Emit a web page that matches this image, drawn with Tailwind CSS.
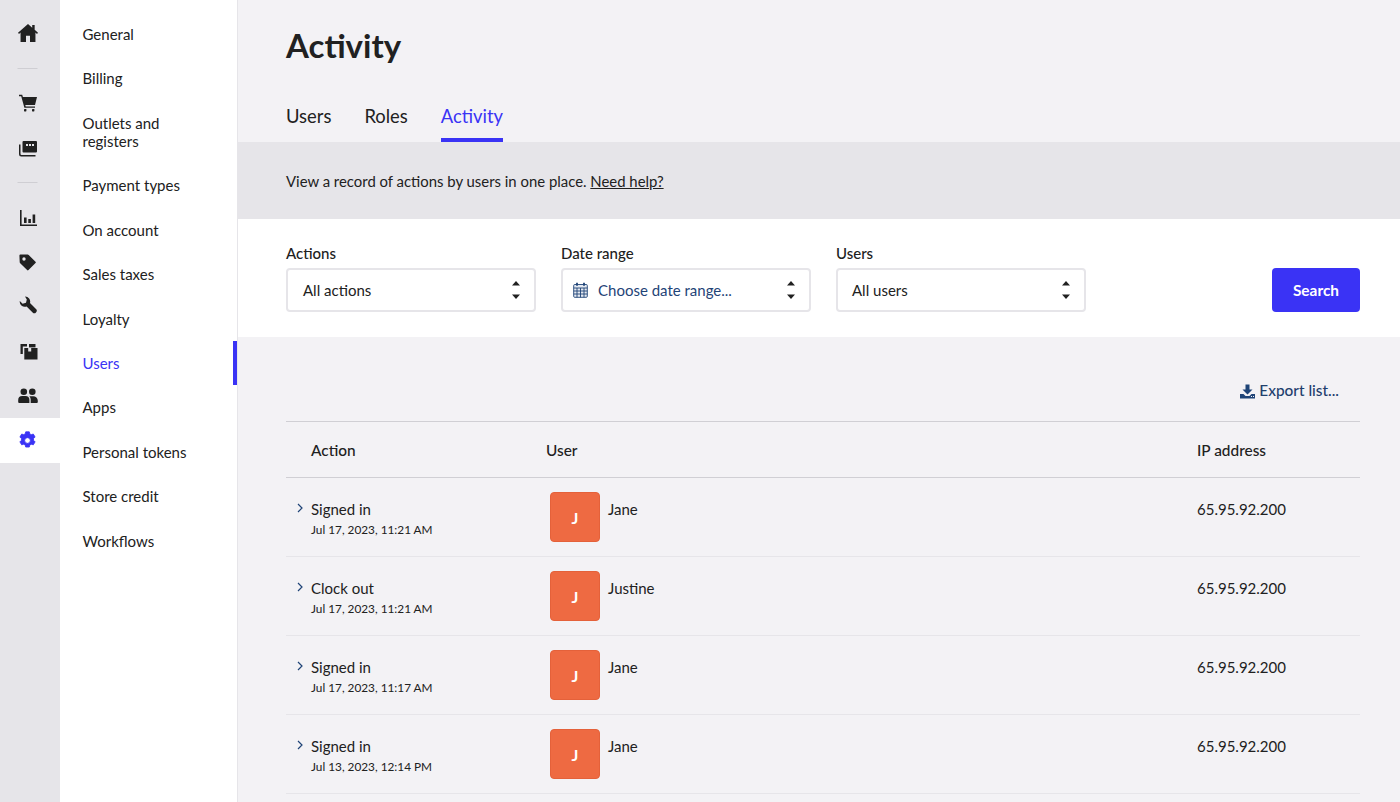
<!DOCTYPE html>
<html>
<head>
<meta charset="utf-8">
<script src="https://cdn.jsdelivr.net/npm/@tailwindcss/browser@4"></script>
</head>
<body class="m-0 overflow-hidden">
<div class="flex h-[802px] w-[1400px] overflow-hidden bg-[#f3f2f5] font-['Lato',sans-serif] text-[15px] text-[#212121]">
  <!-- icon rail -->
  <nav class="flex w-[60px] shrink-0 flex-col items-center bg-[#e6e5e9] text-[#212121]">
    <div class="flex h-[68px] w-full items-center justify-center pb-[2px] pr-[5px]">
      <svg class="h-[20px] w-[20px]" viewBox="0 0 18 18" fill="currentColor"><path d="M9 .8 0 8.800l.9 1 1.400-1.200V17h4.900v-5.600h3.600V17h4.900V8.600l1.400 1.200.9-1-3-2.700V1.800h-2.200v2.400z"/></svg>
    </div>
    <div class="h-px w-5 -translate-x-[2.5px] bg-[#cfced3]"></div>
    <div class="mt-[12px] flex h-[44px] w-full items-center justify-center pr-[5px]">
      <svg class="h-[18px] w-[18px]" viewBox="0 0 18 18" fill="currentColor"><path d="M0 .8h3.200l.7 2.200H18l-2 8H6.300l.4 1.400H16v1.400H5.400L2.200 2.200H0z"/><rect x="5" y="15" width="2.400" height="2.400" rx=".6"/><rect x="13" y="15" width="2.400" height="2.400" rx=".6"/></svg>
    </div>
    <div class="flex h-[44.4px] w-full items-center justify-center pr-[5px] pt-[3px]">
      <svg class="h-[18px] w-[18px]" viewBox="0 0 18 18" fill="currentColor"><path fill-rule="evenodd" d="M4.500 1H17a1 1 0 0 1 1 1v9.500a1 1 0 0 1-1 1H4.500a1 1 0 0 1-1-1V2a1 1 0 0 1 1-1zM7 4v2h2V4zm3 0v2h2V4zm3 0v2h2V4z"/><path d="M0 4.500h1.500V14a1 1 0 0 0 1 1H16.500v1.500H2.200A2.200 2.200 0 0 1 0 14.300z"/></svg>
    </div>
    <div class="mt-[13px] h-px w-5 -translate-x-[2.5px] bg-[#cfced3]"></div>
    <div class="mt-[13px] flex h-[44.4px] w-full items-center justify-center pb-[2px] pr-[5px]">
      <svg class="h-[18px] w-[18px]" viewBox="0 0 18 18" fill="currentColor"><path d="M1 1h1.600v14.400H18V17H1z"/><path d="M5 8.500h2.600V14H5zM9.300 10h2.600v4H9.300zM13.600 5.500h2.600V14h-2.600z"/></svg>
    </div>
    <div class="flex h-[44.4px] w-full items-center justify-center pr-[5px]">
      <svg class="h-[17px] w-[17px]" viewBox="0 0 17 17" fill="currentColor"><path fill-rule="evenodd" d="M.4 1.500A1 1 0 0 1 1.400.6L8.700.5a1.500 1.500 0 0 1 1 .4l6.800 6.800a1 1 0 0 1 0 1.400L9.500 16.100a1 1 0 0 1-1.400 0L1.200 9.200a1.500 1.500 0 0 1-.5-1zM5 3.300a1.700 1.700 0 1 0 0 3.400 1.700 1.700 0 0 0 0-3.400z"/></svg>
    </div>
    <div class="flex h-[44.4px] w-full items-start justify-center pr-[5px] pt-[11px]">
      <svg class="h-[18px] w-[18px]" viewBox="0 0 18 18" fill="currentColor"><path d="M6 .6A5 5 0 0 1 11 7l6 6a2.400 2.400 0 0 1-3.400 3.400l-6-6A5 5 0 0 1 .8 5l2.800 2.800L7 6.800l.8-3.400z"/></svg>
    </div>
    <div class="flex h-[44.4px] w-full items-center justify-center pr-[3px]">
      <svg class="h-[18px] w-[18px]" viewBox="0 0 18 18" fill="currentColor"><path d="M.5 1H7v2.400H2.800V11H.5z"/><path d="M9 1h6.500v3.400H9z"/><path d="M4.300 5h3.900v3.600h3V5h6.300v11.500H4.300z"/></svg>
    </div>
    <div class="flex h-[44.4px] w-full items-center justify-center pr-[5px]">
      <svg class="h-[18px] w-[20px]" viewBox="0 0 20 18" fill="currentColor"><circle cx="5.800" cy="4.700" r="3.300"/><circle cx="14.300" cy="4.700" r="3.300"/><path d="M.2 13a4 4 0 0 1 4-4h3.200a4 4 0 0 1 4 4v3H1.200a1 1 0 0 1-1-1z"/><path d="M12.700 16v-3.500a5 5 0 0 0-1.300-3.300h3.800a4.600 4.600 0 0 1 4.600 4.600V15a1 1 0 0 1-1 1z"/></svg>
    </div>
    <div class="flex h-[44.4px] w-full items-center justify-center bg-white pr-[5px] text-[#3a33f5]">
      <svg class="h-[19px] w-[19px]" viewBox="0 0 18 18" fill="currentColor" stroke="currentColor" stroke-width=".8" stroke-linejoin="round"><path fill-rule="evenodd" d="M7.300.8h3.400l.5 2 1.300.7 2-.6L16.200 5.700l-1.500 1.500v1.600l1.500 1.500-1.700 2.800-2-.6-1.300.7-.5 2H7.300l-.5-2-1.300-.7-2 .6-1.700-2.800 1.500-1.500V7.200L1.800 5.700l1.700-2.800 2 .6 1.300-.7zM9 6.300a2.700 2.700 0 1 0 0 5.400 2.700 2.700 0 0 0 0-5.400z"/></svg>
    </div>
  </nav>

  <!-- secondary sidebar -->
  <aside class="w-[178px] shrink-0 border-r border-[#e6e5e9] bg-white pt-[11.7px] leading-[18.4px]">
    <a class="block py-[13px] pl-[22.5px]">General</a>
    <a class="block py-[13px] pl-[22.5px]">Billing</a>
    <a class="block py-[13px] pl-[22.5px] pr-10">Outlets and registers</a>
    <a class="block py-[13px] pl-[22.5px]">Payment types</a>
    <a class="block py-[13px] pl-[22.5px]">On account</a>
    <a class="block py-[13px] pl-[22.5px]">Sales taxes</a>
    <a class="block py-[13px] pl-[22.5px]">Loyalty</a>
    <a class="block border-r-4 border-[#3a33f5] py-[13px] pl-[22.5px] text-[#3a33f5]">Users</a>
    <a class="block py-[13px] pl-[22.5px]">Apps</a>
    <a class="block py-[13px] pl-[22.5px]">Personal tokens</a>
    <a class="block py-[13px] pl-[22.5px]">Store credit</a>
    <a class="block py-[13px] pl-[22.5px]">Workflows</a>
  </aside>

  <!-- main -->
  <main class="min-w-0 flex-1">
    <header class="h-[142px] px-[48px]">
      <h1 class="pt-[24px] text-[33px] leading-[42px] font-bold text-[#212121]">Activity</h1>
      <div class="mt-[25px] flex gap-[33px] text-[18.4px] leading-[28px]">
        <a class="h-[51px] pt-[11px]">Users</a>
        <a class="h-[51px] pt-[11px]">Roles</a>
        <a class="h-[51px] border-b-4 border-[#3a33f5] pt-[11px] text-[#3a33f5]">Activity</a>
      </div>
    </header>

    <div class="flex h-[77px] items-center bg-[#e6e5e9] px-[48px] pt-[2px] text-[14.9px]">
      <p>View a record of actions by users in one place. <a class="underline">Need help?</a></p>
    </div>

    <section class="flex h-[118px] items-start bg-white pl-[48px] pr-[40px] pt-[25px]">
      <div class="mr-[25px] w-[250px]">
        <div class="font-medium leading-[18px]">Actions</div>
        <div class="mt-[6px] flex h-[44px] items-center justify-between rounded border-2 border-[#e6e5e9] pl-[15px] pr-[13px]">
          <span>All actions</span>
          <svg class="h-[22px] w-[10px]" viewBox="0 0 10 22" fill="#212121"><path d="M5 2 9 6.500H1zM1 15.500h8L5 20z"/></svg>
        </div>
      </div>
      <div class="mr-[25px] w-[250px]">
        <div class="font-medium leading-[18px]">Date range</div>
        <div class="mt-[6px] flex h-[44px] items-center justify-between rounded border-2 border-[#e6e5e9] pl-[10px] pr-[13px] text-[#1f4477]">
          <span class="flex items-center gap-[10px]">
            <svg class="h-[16px] w-[15px]" viewBox="0 0 15 16" fill="none" stroke="#1f4477" stroke-width=".9"><rect x=".7" y="2.500" width="13.600" height="12.800" rx="1" fill="#e4e9f1"/><path d="M.7 6h13.600M.7 9h13.600M.7 12h13.600M4 6v9.300M7.500 6v9.300M11 6v9.300"/><path d="M4 .7v3M11 .7v3" stroke-width="1.800"/></svg>
            Choose date range...
          </span>
          <svg class="h-[22px] w-[10px]" viewBox="0 0 10 22" fill="#212121"><path d="M5 2 9 6.500H1zM1 15.500h8L5 20z"/></svg>
        </div>
      </div>
      <div class="w-[250px]">
        <div class="font-medium leading-[18px]">Users</div>
        <div class="mt-[6px] flex h-[44px] items-center justify-between rounded border-2 border-[#e6e5e9] pl-[14px] pr-[13px]">
          <span>All users</span>
          <svg class="h-[22px] w-[10px]" viewBox="0 0 10 22" fill="#212121"><path d="M5 2 9 6.500H1zM1 15.500h8L5 20z"/></svg>
        </div>
      </div>
      <button class="mt-[24px] ml-auto h-[44px] w-[88px] rounded bg-[#3a33f5] pt-[2px] text-[15.4px] font-bold text-white">Search</button>
    </section>

    <div class="pl-[48px] pr-[40px]">
      <div class="flex h-[84px] items-center justify-end pt-[24px] pr-[21px] text-[15.4px] font-medium text-[#1f3f6e]">
        <svg class="mr-[4px] h-[15px] w-[15px]" viewBox="0 0 15 15" fill="#1f4477"><path d="M5.500.5h4v5h3L7.500 10.500 2.500 5.500h3z"/><path fill-rule="evenodd" d="M0 10h3.500l2 2h4l2-2H15v4.500H0zM11 12v1h1v-1zm2 0v1h1v-1z"/></svg>
        Export list...
      </div>
      <div class="flex h-[57px] items-center border-y border-[#d0cfd4] pt-[2px] text-[15.4px] font-bold">
        <div class="w-[260px] pl-[25px] font-medium">Action</div>
        <div class="flex-1 font-medium">User</div>
        <div class="w-[163px] font-medium">IP address</div>
      </div>

      <div class="flex h-[79px] border-b border-[#e6e5e9]">
        <div class="relative w-[260px] pl-[25px] pt-[22px]">
          <svg class="absolute left-[11px] top-[25px] h-[10px] w-[7px]" viewBox="0 0 7 10" fill="none" stroke="#1f4477" stroke-width="1.200"><path d="m1 1 4 4-4 4"/></svg>
          <div class="leading-[18px]">Signed in</div>
          <div class="mt-[3px] text-[11.8px] leading-[18px]">Jul 17, 2023, 11:21 AM</div>
        </div>
        <div class="flex flex-1 items-start pl-[4px] pt-[14px]">
          <div class="flex h-[50px] w-[50px] items-center justify-center rounded border border-[#e4613a] bg-[#ee6a42] pt-[2px] text-[16px] font-bold text-white">J</div>
          <div class="ml-[8px] pt-[8px] leading-[18px]">Jane</div>
        </div>
        <div class="w-[163px] pt-[22px] leading-[18px]">65.95.92.200</div>
      </div>

      <div class="flex h-[79px] border-b border-[#e6e5e9]">
        <div class="relative w-[260px] pl-[25px] pt-[22px]">
          <svg class="absolute left-[11px] top-[25px] h-[10px] w-[7px]" viewBox="0 0 7 10" fill="none" stroke="#1f4477" stroke-width="1.200"><path d="m1 1 4 4-4 4"/></svg>
          <div class="leading-[18px]">Clock out</div>
          <div class="mt-[3px] text-[11.8px] leading-[18px]">Jul 17, 2023, 11:21 AM</div>
        </div>
        <div class="flex flex-1 items-start pl-[4px] pt-[14px]">
          <div class="flex h-[50px] w-[50px] items-center justify-center rounded border border-[#e4613a] bg-[#ee6a42] pt-[2px] text-[16px] font-bold text-white">J</div>
          <div class="ml-[8px] pt-[8px] leading-[18px]">Justine</div>
        </div>
        <div class="w-[163px] pt-[22px] leading-[18px]">65.95.92.200</div>
      </div>

      <div class="flex h-[79px] border-b border-[#e6e5e9]">
        <div class="relative w-[260px] pl-[25px] pt-[22px]">
          <svg class="absolute left-[11px] top-[25px] h-[10px] w-[7px]" viewBox="0 0 7 10" fill="none" stroke="#1f4477" stroke-width="1.200"><path d="m1 1 4 4-4 4"/></svg>
          <div class="leading-[18px]">Signed in</div>
          <div class="mt-[3px] text-[11.8px] leading-[18px]">Jul 17, 2023, 11:17 AM</div>
        </div>
        <div class="flex flex-1 items-start pl-[4px] pt-[14px]">
          <div class="flex h-[50px] w-[50px] items-center justify-center rounded border border-[#e4613a] bg-[#ee6a42] pt-[2px] text-[16px] font-bold text-white">J</div>
          <div class="ml-[8px] pt-[8px] leading-[18px]">Jane</div>
        </div>
        <div class="w-[163px] pt-[22px] leading-[18px]">65.95.92.200</div>
      </div>

      <div class="flex h-[79px] border-b border-[#e6e5e9]">
        <div class="relative w-[260px] pl-[25px] pt-[22px]">
          <svg class="absolute left-[11px] top-[25px] h-[10px] w-[7px]" viewBox="0 0 7 10" fill="none" stroke="#1f4477" stroke-width="1.200"><path d="m1 1 4 4-4 4"/></svg>
          <div class="leading-[18px]">Signed in</div>
          <div class="mt-[3px] text-[11.8px] leading-[18px]">Jul 13, 2023, 12:14 PM</div>
        </div>
        <div class="flex flex-1 items-start pl-[4px] pt-[14px]">
          <div class="flex h-[50px] w-[50px] items-center justify-center rounded border border-[#e4613a] bg-[#ee6a42] pt-[2px] text-[16px] font-bold text-white">J</div>
          <div class="ml-[8px] pt-[8px] leading-[18px]">Jane</div>
        </div>
        <div class="w-[163px] pt-[22px] leading-[18px]">65.95.92.200</div>
      </div>
    </div>
  </main>
</div>
</body>
</html>
